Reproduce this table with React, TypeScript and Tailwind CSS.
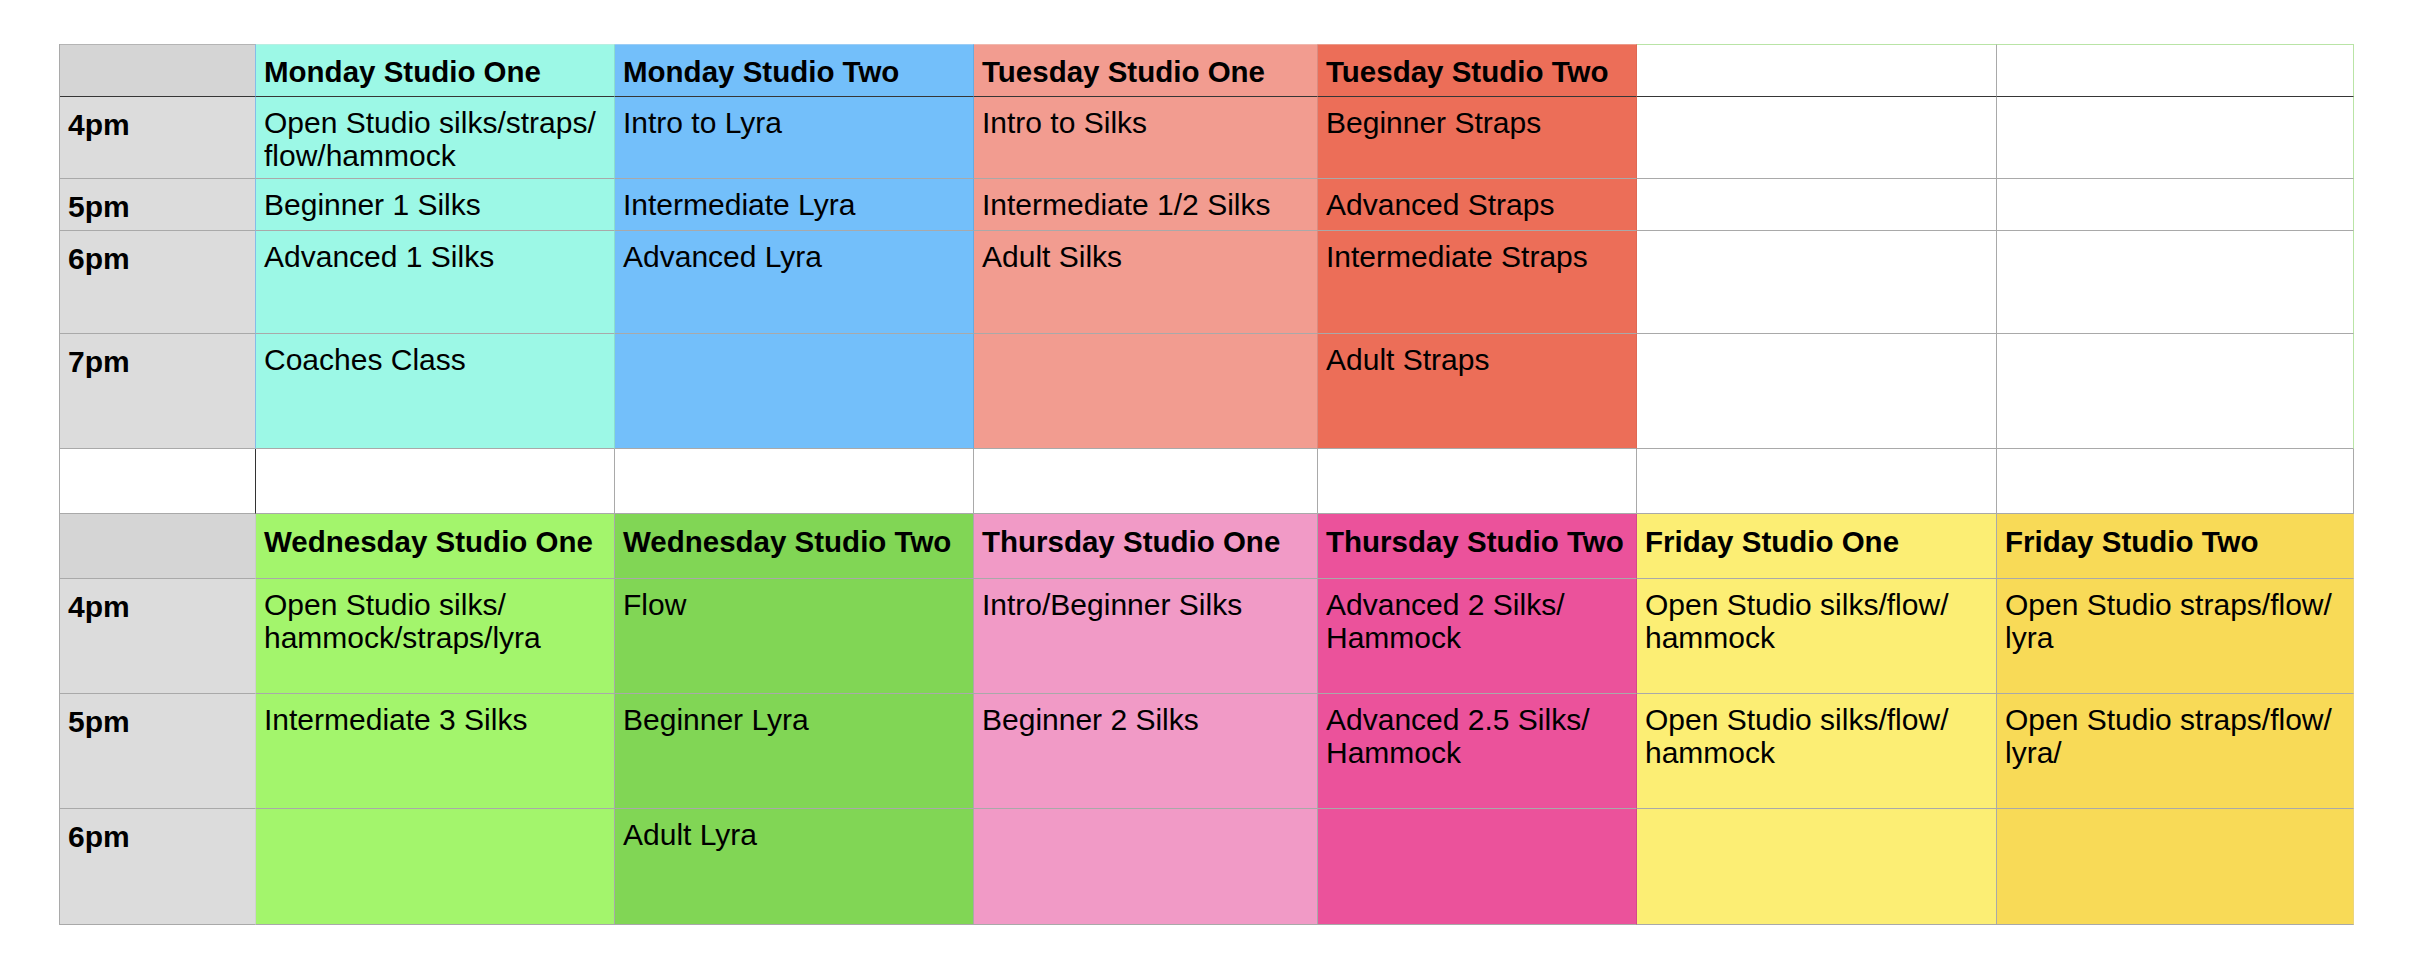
type Row = {
  time?: string;
  cells: string[][];
  h: 'head1' | 'body1' | 'blank' | 'head2' | 'body2';
};

const font = { fontFamily: '"Liberation Sans", Arial, sans-serif' };

const firstBg = ['bg-[#dcdcdc]', 'bg-[#9cf8e6]', 'bg-[#73bffa]', 'bg-[#f29c90]', 'bg-[#ec6e58]', 'bg-white', 'bg-white'];
const secondBg = ['bg-[#dcdcdc]', 'bg-[#a3f56c]', 'bg-[#81d655]', 'bg-[#f19ac6]', 'bg-[#eb529b]', 'bg-[#fcee74]', 'bg-[#f8da57]'];

// right borders, per column
const firstR = [
  'border-r-[#84bce8]',
  'border-r-black/10',
  'border-r-black/10',
  'border-r-black/10',
  'border-r-black/5',
  'border-r-[#a9a9a9]',
  'border-r-[#b9e4a6]',
];
const secondR = [
  'border-r-black/5',
  'border-r-[#a9a9a9]',
  'border-r-[#a9a9a9]',
  'border-r-[#a9a9a9]',
  'border-r-black/10',
  'border-r-[#a9a9a9]',
  'border-r-[#ecd57c]',
];
const blankR = [
  'border-r-[#333333]',
  'border-r-[#a9a9a9]',
  'border-r-[#a9a9a9]',
  'border-r-[#a9a9a9]',
  'border-r-[#a9a9a9]',
  'border-r-[#a9a9a9]',
  'border-r-[#a9a9a9]',
];
const firstTop = [
  'border-t-[#b4b4b4]',
  'border-t-[#b8efe2]',
  'border-t-[#9ccdf5]',
  'border-t-[#f0b8ae]',
  'border-t-[#eb9a8a]',
  'border-t-[#b9e4a6]',
  'border-t-[#b9e4a6]',
];

const rows: Row[] = [
  { h: 'head1', cells: [['Monday Studio One'], ['Monday Studio Two'], ['Tuesday Studio One'], ['Tuesday Studio Two'], [], []] },
  {
    h: 'body1',
    time: '4pm',
    cells: [['Open Studio silks/straps/', 'flow/hammock'], ['Intro to Lyra'], ['Intro to Silks'], ['Beginner Straps'], [], []],
  },
  { h: 'body1', time: '5pm', cells: [['Beginner 1 Silks'], ['Intermediate Lyra'], ['Intermediate 1/2 Silks'], ['Advanced Straps'], [], []] },
  { h: 'body1', time: '6pm', cells: [['Advanced 1 Silks'], ['Advanced Lyra'], ['Adult Silks'], ['Intermediate Straps'], [], []] },
  { h: 'body1', time: '7pm', cells: [['Coaches Class'], [], [], ['Adult Straps'], [], []] },
  { h: 'blank', cells: [[], [], [], [], [], []] },
  {
    h: 'head2',
    cells: [
      ['Wednesday Studio One'],
      ['Wednesday Studio Two'],
      ['Thursday Studio One'],
      ['Thursday Studio Two'],
      ['Friday Studio One'],
      ['Friday Studio Two'],
    ],
  },
  {
    h: 'body2',
    time: '4pm',
    cells: [
      ['Open Studio silks/', 'hammock/straps/lyra'],
      ['Flow'],
      ['Intro/Beginner Silks'],
      ['Advanced 2 Silks/', 'Hammock'],
      ['Open Studio silks/flow/', 'hammock'],
      ['Open Studio straps/flow/', 'lyra'],
    ],
  },
  {
    h: 'body2',
    time: '5pm',
    cells: [
      ['Intermediate 3 Silks'],
      ['Beginner Lyra'],
      ['Beginner 2 Silks'],
      ['Advanced 2.5 Silks/', 'Hammock'],
      ['Open Studio silks/flow/', 'hammock'],
      ['Open Studio straps/flow/', 'lyra/'],
    ],
  },
  { h: 'body2', time: '6pm', cells: [[], ['Adult Lyra'], [], [], [], []] },
];

function cellClass(row: Row, ci: number) {
  const base = 'border-r border-b pl-2 leading-[33px] text-black';
  let bg = 'bg-white';
  let r = 'border-r-[#a9a9a9]';
  let b = 'border-b-[#a9a9a9]';
  let t = '';
  let pad = 'pt-[9px]';
  if (row.h === 'head1' || row.h === 'body1') {
    bg = firstBg[ci];
    r = firstR[ci];
  } else if (row.h === 'blank') {
    r = blankR[ci];
  } else {
    bg = secondBg[ci];
    r = secondR[ci];
  }
  const head = row.h === 'head1' || row.h === 'head2';
  if (row.h === 'head1') {
    b = 'border-b-[#363636]';
    t = 'border-t ' + firstTop[ci];
    pad = 'pt-[10px]';
    if (ci === 0) bg = 'bg-[#d5d5d5]';
  }
  if (row.h === 'head2') {
    pad = 'pt-[11px]';
    if (ci === 0) bg = 'bg-[#d5d5d5]';
  }
  if ((row.h === 'body1' || row.h === 'body2') && ci === 0) pad = 'pt-[11px]';
  const bold = head || ci === 0 ? 'font-bold' : '';
  const size = head ? 'text-[29.5px]' : 'text-[30px]';
  return [base, bg, r, b, t, pad, bold, size].join(' ');
}

export default function App() {
  return (
    <div className="min-h-screen bg-white pl-[59px] pt-[44px]" style={font}>
      <div className="grid w-max grid-cols-[196px_359px_359px_344px_319px_360px_357px] grid-rows-[53px_82px_52px_103px_115px_65px_65px_115px_115px_116px] border-l border-l-[#a9a9a9]">
        {rows.map((row, ri) =>
          [row.time ? [row.time] : [], ...row.cells].map((lines, ci) => (
            <div key={`${ri}-${ci}`} className={cellClass(row, ci)}>
              {lines.map((line, li) => (
                <div key={li} className="whitespace-nowrap">
                  {line}
                </div>
              ))}
            </div>
          ))
        )}
      </div>
    </div>
  );
}
